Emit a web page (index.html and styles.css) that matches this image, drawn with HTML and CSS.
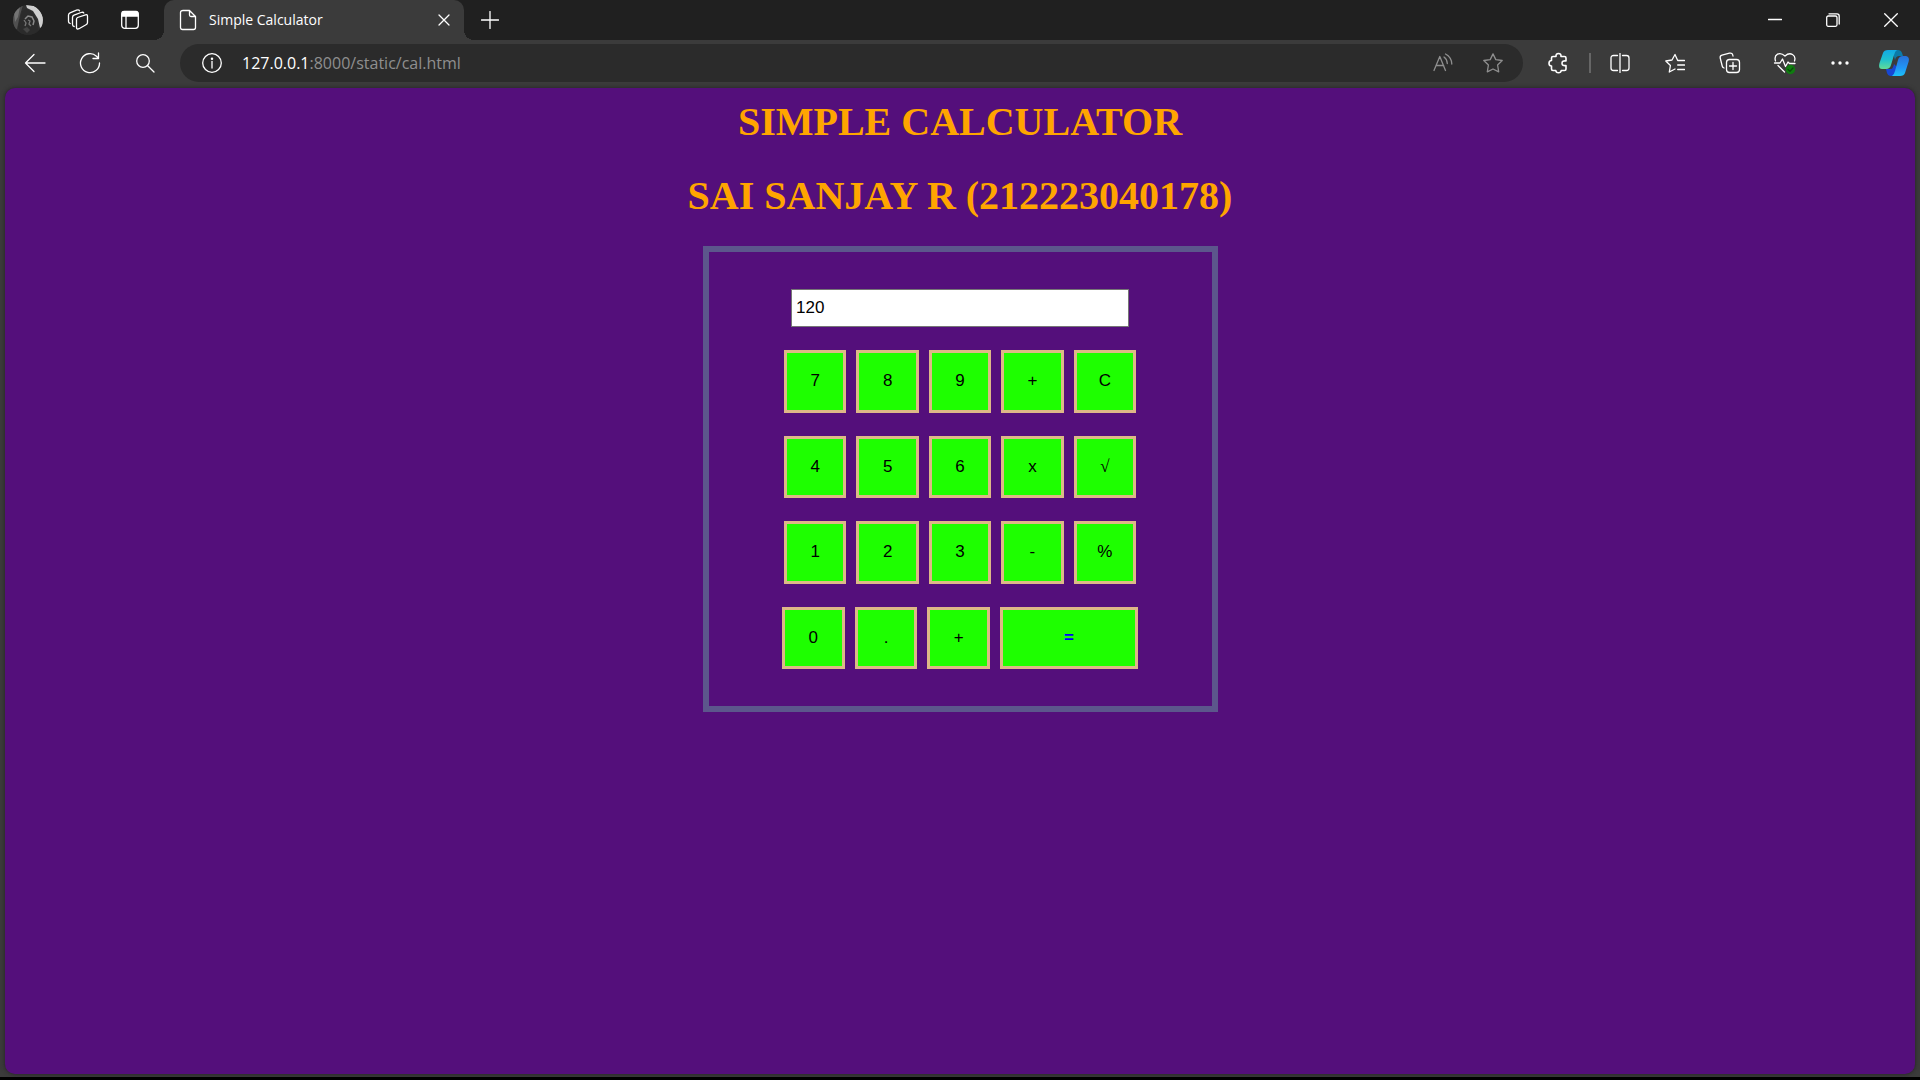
FILE: index.html
```html
<!DOCTYPE html>
<html lang="en">
<head>
<meta charset="utf-8">
<title>Simple Calculator</title>
<link rel="stylesheet" href="styles.css">
</head>
<body>
<header class="titlebar">
  <button class="avatar-btn" aria-label="Profile">
    <svg width="30" height="30" viewBox="0 0 30 30">
      <defs><clipPath id="face"><circle cx="15" cy="15" r="15"/></clipPath></defs>
      <g clip-path="url(#face)">
        <rect width="30" height="30" fill="#303030"/>
        <path d="M0 6L10 0L7 10L4 24L0 26Z" fill="#505050"/>
        <path d="M1 7L7 2L5 12L2 17Z" fill="#747474"/>
        <path d="M13 0L21 1Q27 4 30 12L30 21L27 23L25 14L20 6L14 3Z" fill="#cfcfcf"/>
        <path d="M9 6L13 4L19 7L24 16L26 30L8 30L5 22Z" fill="#2b2b2b"/>
        <path d="M12 14l3-3 4 1 2 4-1 4" fill="none" stroke="#8a8a8a" stroke-width="1.500"/>
        <path d="M11 15l2 3-1 3M15 15l2 1-1 3 2 2" fill="none" stroke="#777" stroke-width="1.300"/>
        <path d="M10 24l4-2 3 3-3 3z" fill="#444"/>
      </g>
    </svg>
  </button>
  <button class="strip-btn" aria-label="Workspaces">
    <svg class="icon" width="22" height="22" viewBox="0 0 22 22">
      <path d="M10.500 8.500L18.500 5.800Q20.500 5.300 20.500 7.200V13.500Q20.500 15 19 15.800L12 19.700Q9.500 20.800 9.500 18.500V10.200Q9.500 9 10.500 8.500Z"/>
      <path d="M7.200 17.500Q5.500 17.300 5.500 15.500V8.500Q5.500 6.800 7 6.200L14 3.500Q16.300 2.800 16.800 4"/>
      <path d="M3.200 14.500Q1.500 14 1.500 12.500V6Q1.500 4.500 3 3.800L9.500 1.200Q12 .500 12.500 1.800"/>
    </svg>
  </button>
  <button class="strip-btn" aria-label="Tab actions">
    <svg class="icon" width="20" height="20" viewBox="0 0 20 20">
      <rect x="1.700" y="1.700" width="16.600" height="16.600" rx="3"/>
      <path d="M2 2.500Q2 1.500 4 1.500H16Q18 1.500 18 3.500V6H2Z" fill="#fff"/><path d="M6 6V18"/>
    </svg>
  </button>
  <div class="tab">
    <svg class="icon" width="18" height="22" viewBox="0 0 18 22">
      <path d="M4 1.500H10.500L16.500 7.500V18.500Q16.500 20.500 14.500 20.500H3.500Q1.500 20.500 1.500 18.500V3.500Q1.500 1.500 4 1.500ZM10.500 1.500V6Q10.500 7.500 12 7.500H16.500"/>
    </svg>
    <span class="tab-title">Simple Calculator</span>
    <button class="tab-close" aria-label="Close tab">
      <svg class="icon" width="12" height="12" viewBox="0 0 12 12"><path d="M1 1L11 11M11 1L1 11"/></svg>
    </button>
  </div>
  <button class="new-tab" aria-label="New tab">
    <svg class="icon" width="18" height="18" viewBox="0 0 18 18"><path d="M9 .500V17.500M.500 9H17.500"/></svg>
  </button>
  <div class="window-controls">
    <button aria-label="Minimize"><svg class="icon" width="14" height="14" viewBox="0 0 14 14"><path d="M.500 6.500H13.500"/></svg></button>
    <button aria-label="Restore"><svg class="icon" width="14" height="14" viewBox="0 0 14 14"><rect x=".700" y="3" width="10.300" height="10.300" rx="1.500"/><path d="M3 .800H11Q13.200 .800 13.200 3V11"/></svg></button>
    <button aria-label="Close"><svg class="icon" width="14" height="14" viewBox="0 0 14 14"><path d="M.700 .700L13.300 13.300M13.300 .700L.700 13.300"/></svg></button>
  </div>
</header>

<nav class="toolbar">
  <button class="tool" aria-label="Back">
    <svg class="icon" width="22" height="20" viewBox="0 0 22 20"><path d="M21 10H1.500M10 1.500L1.500 10L10 18.500"/></svg>
  </button>
  <button class="tool" aria-label="Refresh">
    <svg class="icon" width="22" height="22" viewBox="0 0 22 22"><path d="M20.500 11A9.500 9.500 0 1 1 17.500 4.200L19.500 6.300M19.500 1V6.500H14"/></svg>
  </button>
  <button class="tool" aria-label="Search">
    <svg class="icon" width="20" height="20" viewBox="0 0 20 20"><circle cx="8" cy="8" r="6.300"/><path d="M12.700 12.700L19 19"/></svg>
  </button>
  <div class="address">
    <button class="info" aria-label="View site information">
      <svg class="icon" width="20" height="20" viewBox="0 0 20 20"><circle cx="10" cy="10" r="9.300"/><path d="M10 8.500V15"/><circle cx="10" cy="5.800" r=".600"/></svg>
    </button>
    <a class="url" href="#"><span class="host">127.0.0.1</span>:8000/static/cal.html</a>
    <button class="muted" aria-label="Read aloud">
      <svg class="icon" width="20" height="20" viewBox="0 0 20 20"><path d="M1 17.500L6.800 3.500L12.500 17.500M3 12.500H10.700M11 4Q14 6 14.300 10.500M12.500 1Q18.500 4 18.800 11"/></svg>
    </button>
    <button class="muted" aria-label="Add to favorites">
      <svg class="icon" width="20" height="20" viewBox="0 0 20 20"><path d="M10 .900L12.800 6.600L19.200 7.500L14.600 12L15.700 18.800L10 16L4.300 18.800L5.400 12L.800 7.500L7.200 6.600Z"/></svg>
    </button>
  </div>
  <button class="extensions" aria-label="Extensions">
    <svg class="icon bold" width="20" height="22" viewBox="0 0 20 22"><path d="M5 4.500H8Q7.700 1.500 10.500 1.500T13 4.500H16.500Q18 4.500 18 6V9Q14 8.300 14 11.200T18 13.500V17Q18 18.500 16.500 18.500H13.200Q13 20.800 10.500 20.800T7.800 18.500H5Q3.500 18.500 3.500 17V14Q1 14 1 11.300T3.500 8.500V6Q3.500 4.500 5 4.500Z"/></svg>
  </button>
  <span class="separator"></span>
  <button class="tool" aria-label="Split screen">
    <svg class="icon" width="20" height="20" viewBox="0 0 20 20"><path d="M7.500 2.500H3.500Q1 2.500 1 5V15Q1 17.500 3.500 17.500H7.500M12.500 2.500H16.500Q19 2.500 19 5V15Q19 17.500 16.500 17.500H12.500M10 .500V19.500"/></svg>
  </button>
  <button class="tool" aria-label="Favorites">
    <svg class="icon" width="20" height="20" viewBox="0 0 20 20"><path d="M19.500 7.500H12.700L10 1.500L7 7L.800 8L5.400 12.500L4.300 19L10 16M12.700 12H19.500M12.700 16.500H19.500"/></svg>
  </button>
  <button class="tool" aria-label="Collections">
    <svg class="icon" width="22" height="22" viewBox="0 0 22 22"><rect x="7.500" y="7.500" width="13" height="13" rx="3"/><path d="M14 10.500V17.500M10.500 14H17.500M5 16Q3.500 15.500 3.200 14L1.200 6Q.800 3.800 3 3.200L10.500 1.200Q13.500 .500 14 4"/></svg>
  </button>
  <button class="tool" aria-label="Browser essentials">
    <svg class="icon" width="24" height="24" viewBox="0 0 24 24"><path d="M2.500 10Q1 5 4.500 3.200T12 5Q16 1.500 19.500 3.500T21.500 10M1.500 12H7L9.500 8L12.500 15.500L15 11L16.500 12.500H22M5 14.500L11.500 21"/><circle cx="17.500" cy="18.500" r="4.700" fill="#107c10" stroke="none"/><path d="M15 18.500L17 20.200L20 17" stroke="#0a4c0a"/></svg>
  </button>
  <button class="tool" aria-label="Settings and more">
    <svg width="18" height="6" viewBox="0 0 18 6" fill="#fff"><circle cx="2" cy="3" r="1.700"/><circle cx="9" cy="3" r="1.700"/><circle cx="16" cy="3" r="1.700"/></svg>
  </button>
  <button class="copilot" aria-label="Copilot">
    <svg width="30" height="28" viewBox="0 0 30 28">
      <defs>
        <linearGradient id="leaf" x1="0" y1="0" x2="0" y2="1"><stop offset="0" stop-color="#12a9e6"/><stop offset=".5" stop-color="#1fc0cf"/><stop offset="1" stop-color="#62dc96"/></linearGradient>
        <linearGradient id="wave" x1="0" y1="0" x2="0" y2="1"><stop offset="0" stop-color="#2870d8"/><stop offset=".6" stop-color="#2196f5"/><stop offset="1" stop-color="#1cc3fa"/></linearGradient>
      </defs>
      <path d="M13 1H19Q22 1 23 4L24 7H20Q17 7 16 11Z" fill="#0b7aa8"/>
      <path d="M7 20H12Q14 20 15 15L18 18L15 27H12Q9 27 8 24Z" fill="#1747d4"/>
      <path d="M9 1H18Q16 2 15 6L12 16Q11 20 7 20H3Q-1 20 .500 14L4 4Q5 1 9 1Z" fill="url(#leaf)"/>
      <path d="M24 7H27Q31 8 29.500 13L26 24Q25 27 21 27H13Q15 26 16 22L19 11Q20 7 24 7Z" fill="url(#wave)"/>
    </svg>
  </button>
</nav>

<main class="page">
  <h1>SIMPLE CALCULATOR</h1>
  <h1>SAI SANJAY R (212223040178)</h1>
  <form class="calculator">
    <input class="display" type="text" value="120" aria-label="Result">
    <div class="row">
      <button type="button">7</button><button type="button">8</button><button type="button">9</button><button type="button">+</button><button type="button">C</button>
    </div>
    <div class="row">
      <button type="button">4</button><button type="button">5</button><button type="button">6</button><button type="button">x</button><button type="button" class="root">√</button>
    </div>
    <div class="row">
      <button type="button">1</button><button type="button">2</button><button type="button">3</button><button type="button">-</button><button type="button">%</button>
    </div>
    <div class="row last">
      <button type="button">0</button><button type="button">.</button><button type="button">+</button><button type="button" class="equals">=</button>
    </div>
  </form>
</main>
</body>
</html>
```
FILE: styles.css
```css
* {
  box-sizing: border-box;
}

body {
  margin: 0;
  min-height: 100vh;
  display: flex;
  flex-direction: column;
  background: #3b3b3b;
  border-bottom: 3px solid #000;
  font-family: "Open Sans", "Noto Sans", sans-serif;
}

button {
  display: flex;
  align-items: center;
  justify-content: center;
  padding: 0;
  border: 0;
  background: none;
  color: inherit;
}

.icon {
  fill: none;
  stroke: #fff;
  stroke-width: 1.3;
  stroke-linecap: round;
  stroke-linejoin: round;
}

.icon.bold {
  stroke-width: 1.6;
}

/* Tab strip */
.titlebar {
  display: flex;
  height: 40px;
  background: #202020;
}

.avatar-btn {
  width: 30px;
  margin: 0 9px 0 13px;
}

.strip-btn {
  width: 52px;
}

.tab {
  position: relative;
  display: flex;
  align-items: center;
  width: 300px;
  margin-left: 8px;
  padding: 0 8px 0 15px;
  background: #3b3b3b;
  border-radius: 10px 10px 0 0;
  color: #fff;
}

.tab::before,
.tab::after {
  content: "";
  position: absolute;
  bottom: 0;
  width: 10px;
  height: 10px;
}

.tab::before {
  left: -10px;
  background: radial-gradient(circle at 0 0, #202020 10px, #3b3b3b 10px);
}

.tab::after {
  right: -10px;
  background: radial-gradient(circle at 100% 0, #202020 10px, #3b3b3b 10px);
}

.tab-title {
  flex: 1;
  margin-left: 12px;
  font-size: 14px;
  line-height: 18px;
  padding-bottom: 1px;
}

.tab-close {
  width: 24px;
  height: 24px;
}

.new-tab {
  width: 52px;
}

.window-controls {
  display: flex;
  margin-left: auto;
}

.window-controls button {
  width: 58px;
}

/* Toolbar */
.toolbar {
  display: flex;
  align-items: center;
  height: 48px;
  padding: 0 0 2px 7px;
}

.tool {
  width: 55px;
  height: 38px;
}

.address {
  display: flex;
  align-items: center;
  flex: 1;
  height: 38px;
  margin: 0 5px 0 8px;
  padding: 0 5px 0 20px;
  border-radius: 19px;
  background: #2b2b2b;
}

.info {
  width: 24px;
}

.url {
  flex: 1;
  margin-left: 18px;
  color: #8f8f8f;
  font-size: 16px;
  text-decoration: none;
}

.host {
  color: #fff;
}

.muted {
  width: 50px;
}

.muted .icon {
  stroke: #8f8f8f;
}

.extensions {
  width: 60px;
}

.separator {
  width: 2px;
  height: 20px;
  margin: 0 1px;
  background: #666;
}

.copilot {
  width: 53px;
}

/* Calculator page */
.page {
  flex: 1;
  display: flex;
  flex-direction: column;
  align-items: center;
  gap: 26px;
  margin: 0 5px 3px;
  padding: 10px 0;
  background: #540f7b;
  border-radius: 10px;
  box-shadow: 0 0 4px #222;
}

h1 {
  margin: 0;
  color: orange;
  font: bold 40px/48px "Liberation Serif", "Times New Roman", serif;
}

.calculator {
  display: flex;
  flex-direction: column;
  align-items: center;
  gap: 23px;
  width: 515px;
  min-height: 466px;
  padding: 37px 0;
  border: 6px solid #5c568c;
}

.display {
  width: 338px;
  height: 38px;
  padding: 0 4px;
  border: 1px solid #767676;
  background: #fff;
  color: #000;
  font: 17px "Liberation Sans", Arial, sans-serif;
}

.row {
  display: flex;
  flex: 1;
  gap: 10px;
  width: 352px;
}

.row button {
  flex: 1;
  border: 3px solid burlywood;
  background: #1eff00;
  color: #000;
  font: 17px "Liberation Sans", Arial, sans-serif;
}

.row .root {
  font-family: "Liberation Serif", "Times New Roman", serif;
}

.row.last {
  width: 356px;
}

.row .equals {
  flex: none;
  width: 138px;
  color: #00f;
  font-weight: bold;
}
```
